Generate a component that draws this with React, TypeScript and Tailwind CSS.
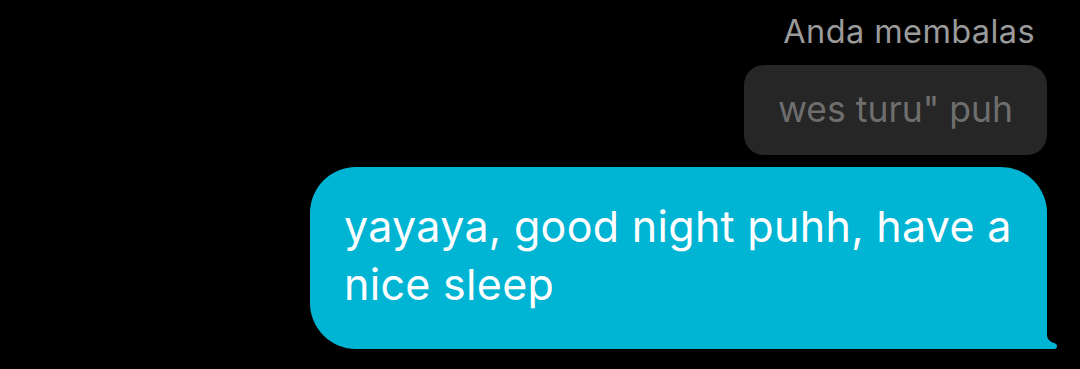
export default function App() {
  return (
    <div className="w-[1080px] h-[369px] bg-black overflow-hidden" style={{ fontFamily: 'Inter, "Noto Sans", sans-serif' }}>
      <div className="flex flex-col items-end pr-[33px] pt-[12px]">
        {/* reply label */}
        <div className="pr-[12px] text-[32.5px] leading-[40px] tracking-[0.4px] text-[#9a9a9a]">Anda membalas</div>

        {/* quoted message */}
        <div className="mt-[13px] h-[90px] flex items-center rounded-[20px] bg-[#262626] px-[34px] text-[35.5px] text-[#6e6e6e]">
          wes turu" puh
        </div>

        {/* own message */}
        <div className="relative mt-[12px] w-[737px] rounded-[46px] rounded-br-none bg-[#00b4d4] pl-[34px] pr-[20px] pt-[30px] pb-[36px] text-[43px] leading-[58px] tracking-[0.3px] text-white">
          yayaya, good night puhh, have a nice sleep
          <svg className="absolute -right-[11px] bottom-0" width="12" height="20" viewBox="0 0 12 20">
            <path d="M0 0 C0 10 4 13 8 14 C12 15 12 20 8 20 L0 20 Z" fill="#00b4d4" />
          </svg>
        </div>
      </div>
    </div>
  );
}
